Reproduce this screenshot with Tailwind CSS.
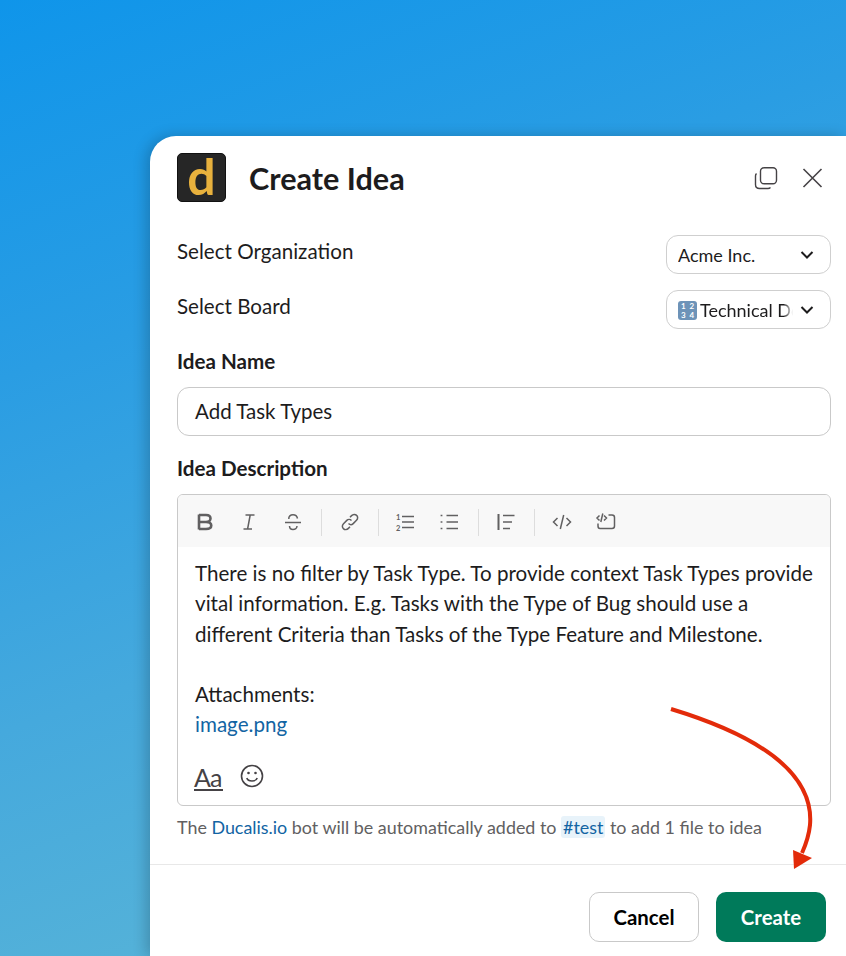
<!DOCTYPE html>
<html lang="en">
<head>
  <meta charset="UTF-8" />
  <meta name="viewport" content="width=device-width, initial-scale=1.0" />
  <title>Create Idea</title>
  <script src="https://cdn.jsdelivr.net/npm/@tailwindcss/browser@4"></script>
</head>
<body class="font-['Lato','Noto_Sans',sans-serif] text-[#1d1c1d]">
  <div class="relative w-[846px] h-[956px] overflow-hidden pt-[136px] pl-[150px] bg-[linear-gradient(160deg,#0f95ea_0%,#2a9de3_30%,#45a9dd_58%,#5cb6d6_92%)]">

    <div class="w-[696px] h-[820px] bg-white rounded-tl-[26px] shadow-[-4px_0_14px_rgba(0,0,0,0.2)]">

      <!-- header -->
      <div class="flex items-center h-[83px] pl-[27px] pr-[22px]">
        <div class="w-[49px] h-[49px] rounded-[5px] bg-[#262626] border border-[#111] flex justify-center">
          <span class="text-[#e8b13d] text-[50px] font-bold leading-[44px]">d</span>
        </div>
        <h1 class="ml-[23px] mt-[3px] text-[30.6px] font-bold leading-none">Create Idea</h1>
        <div class="ml-auto flex items-center gap-[22px] text-[#454245]">
          <svg width="24" height="24" viewBox="0 0 24 24" fill="none" stroke="currentColor" stroke-width="1.4"><rect x="6.5" y="1.7" width="16" height="16" rx="3.5"/><path d="M2.5 7.5 C1.8 8.2 1.5 9 1.5 10 V18.5 C1.5 21 3 22.5 5.5 22.5 H14 C15 22.5 15.8 22.2 16.5 21.5"/></svg>
          <svg width="24" height="24" viewBox="0 0 24 24" fill="none" stroke="currentColor" stroke-width="1.6"><path d="M3.5 3 L21.5 21 M21.5 3 L3.5 21"/></svg>
        </div>
      </div>

      <div class="pl-[27px] pr-[15px]">
        <!-- selects -->
        <div class="flex justify-between h-[55px] pt-[16px]">
          <label class="text-[20.6px] leading-[30px] mt-[1px]">Select Organization</label>
          <div class="w-[165px] h-[39px] border border-[#cfcfcf] rounded-[12px] flex items-center pl-[11px] pr-[16px] pt-[1px] text-[18px]">
            <span class="flex-1 truncate">Acme Inc.</span>
            <svg width="14" height="10" viewBox="0 0 14 10" fill="none" stroke="#1d1c1d" stroke-width="2"><path d="M1.5 2 L7 7.5 L12.5 2"/></svg>
          </div>
        </div>
        <div class="flex justify-between h-[55px] pt-[16px]">
          <label class="text-[20.6px] leading-[30px] mt-[1px]">Select Board</label>
          <div class="w-[165px] h-[39px] border border-[#cfcfcf] rounded-[12px] flex items-center pl-[11px] pr-[16px] pt-[1px] text-[18px] gap-[3px]">
            <span class="w-[19px] h-[19px] rounded-[3px] bg-[#6d93b8] text-white text-[8px] font-bold leading-[9px] grid grid-cols-2 text-center shrink-0 p-[1px]"><span>1</span><span>2</span><span>3</span><span>4</span></span>
            <span class="w-[93px] overflow-hidden whitespace-nowrap [mask-image:linear-gradient(to_right,black_90%,transparent)]">Technical Debt</span>
            <svg class="ml-auto shrink-0" width="14" height="10" viewBox="0 0 14 10" fill="none" stroke="#1d1c1d" stroke-width="2"><path d="M1.5 2 L7 7.5 L12.5 2"/></svg>
          </div>
        </div>

        <!-- idea name -->
        <label class="block text-[20.6px] font-bold leading-[30px] mt-[17px]">Idea Name</label>
        <div class="mt-[11px] h-[49px] border border-[#c9c9c9] rounded-[12px] flex items-center px-[17px] text-[20.5px]">Add Task Types</div>

        <!-- description -->
        <label class="block text-[20.6px] font-bold leading-[30px] mt-[17px]">Idea Description</label>
        <div class="mt-[11px] h-[312px] border border-[#c9c9c9] rounded-[6px] overflow-hidden flex flex-col">
          <div class="h-[52px] bg-[#f8f8f8] flex items-center pl-[16px] pt-[2px] text-[#616061] shrink-0">
            <svg class="w-[22px] h-[22px] mr-[22px]" viewBox="0 0 22 22" fill="none" stroke="currentColor" stroke-width="2.6"><path d="M5 3.5 V18.5 M5 4 H12 C18 4 18 11 12 11 H5 M12 11 C19 11 19 18 12 18 H5"/></svg>
            <svg class="w-[22px] h-[22px] mr-[22px]" viewBox="0 0 22 22" fill="none" stroke="currentColor" stroke-width="1.5"><path d="M7.5 4 H16.5 M5.5 18 H14 M12.2 4 L9.6 18"/></svg>
            <svg class="w-[22px] h-[22px] mr-[17px]" viewBox="0 0 22 22" fill="none" stroke="currentColor" stroke-width="1.5"><path d="M3 11.5 H19 M15.5 7.5 C15 5 13 3.8 11 3.8 C8.5 3.8 6.5 5.2 6.8 8 M7.5 15 C7.5 17.5 9 18.5 11 18.5 C13 18.5 15 17.2 15 15"/></svg>
            <span class="w-px h-[27px] bg-[#dddddd] mr-[17px]"></span>
            <svg class="w-[22px] h-[22px] mr-[17px]" viewBox="0 0 22 22" fill="none" stroke="currentColor" stroke-width="1.5"><path d="M9.5 12.5 C11 14 13 13.8 14.2 12.6 L17.5 9.3 C19 7.8 19 5.6 17.6 4.4 C16.2 3 14 3.2 12.6 4.6 L11 6.2 M12.5 9.5 C11 8 9 8.2 7.8 9.4 L4.5 12.7 C3 14.2 3 16.4 4.4 17.6 C5.8 19 8 18.8 9.4 17.4 L11 15.8"/></svg>
            <span class="w-px h-[27px] bg-[#dddddd] mr-[15px]"></span>
            <svg class="w-[22px] h-[22px] mr-[23px]" viewBox="0 0 22 22" fill="none" stroke="currentColor" stroke-width="1.5"><path d="M8 5.5 H20 M8 11 H20 M8 16.5 H20"/><text x="2" y="8.5" font-size="7.5" font-weight="700" fill="currentColor" stroke="none">1</text><text x="2" y="19.5" font-size="7.5" font-weight="700" fill="currentColor" stroke="none">2</text></svg>
            <svg class="w-[22px] h-[22px] mr-[17px]" viewBox="0 0 22 22" fill="none" stroke="currentColor" stroke-width="1.5"><path d="M7.5 4.5 H19 M7.5 11 H19 M7.5 17.5 H19"/><path d="M2.5 3.7 V5.3 M2.5 10.2 V11.8 M2.5 16.7 V18.3" stroke-width="1.8"/></svg>
            <span class="w-px h-[27px] bg-[#dddddd] mr-[16px]"></span>
            <svg class="w-[22px] h-[22px] mr-[17px]" viewBox="0 0 22 22" fill="none" stroke="currentColor" stroke-width="1.5"><path d="M3.5 3 V19" stroke-width="2"/><path d="M8 4.5 H19.5 M8 11 H17 M8 17.5 H15"/></svg>
            <span class="w-px h-[27px] bg-[#dddddd] mr-[16px]"></span>
            <svg class="w-[22px] h-[22px] mr-[22px]" viewBox="0 0 22 22" fill="none" stroke="currentColor" stroke-width="1.5"><path d="M6.5 7 L2.5 11 L6.5 15 M15.5 7 L19.5 11 L15.5 15 M12.7 4 L9.3 18"/></svg>
            <svg class="w-[22px] h-[22px]" viewBox="0 0 22 22" fill="none" stroke="currentColor" stroke-width="1.5"><path d="M4.5 4.5 L2 7 L4.5 9.5 M9 4.5 L11.5 7 L9 9.5 M7.8 2.5 L5.8 11 M13.5 4 H17 C18.5 4 19.5 5 19.5 6.5 V15 C19.5 16.5 18.5 17.5 17 17.5 H5 C4 17.5 3 16.5 3 15 V12.5"/></svg>
          </div>
          <div class="flex-1 bg-white px-[17px] pt-[11px] text-[20.6px] leading-[30.3px] whitespace-nowrap">
            <p>There is no filter by Task Type. To provide context Task Types provide</p>
            <p>vital information. E.g. Tasks with the Type of Bug should use a</p>
            <p>different Criteria than Tasks of the Type Feature and Milestone.</p>
            <p class="h-[30.3px]"></p>
            <p>Attachments:</p>
            <p class="text-[#1264a3]">image.png</p>
          </div>
          <div class="h-[58px] flex items-start pl-[16px] pt-[16px] shrink-0 text-[#454245]">
            <span class="text-[25px] leading-[29px] border-b-2 border-[#454245] h-[28px] w-[29px] tracking-[-1px]">Aa</span>
            <svg class="ml-[17px] mt-[1px]" width="24" height="24" viewBox="0 0 24 24" fill="none" stroke="currentColor" stroke-width="1.6"><circle cx="12" cy="12" r="10.5"/><path d="M6.8 14 C8 18 16 18 17.2 14"/><circle cx="8.5" cy="9" r="1.3" fill="currentColor" stroke="none"/><circle cx="15.5" cy="9" r="1.3" fill="currentColor" stroke="none"/></svg>
          </div>
        </div>

        <p class="mt-[9px] text-[17.9px] leading-[24px] text-[#616061] whitespace-nowrap">The <span class="text-[#1264a3]">Ducalis.io</span> bot will be automatically added to <span class="text-[#1264a3] bg-[#e8f3fa] rounded-[3px] px-[2px]">#test</span> to add 1 file to idea</p>
      </div>

      <!-- footer -->
      <div class="mt-[25px] border-t border-[#e8e8e8] flex justify-end gap-[17px] pt-[27px] pr-[20px]">
        <button class="w-[110px] h-[50px] border border-[#c9c9c9] rounded-[10px] bg-white text-[20.4px] font-bold text-black">Cancel</button>
        <button class="w-[110px] h-[50px] rounded-[10px] bg-[#007a5a] text-[20.4px] font-bold text-white">Create</button>
      </div>
    </div>

    <!-- annotation arrow -->
    <svg class="absolute left-0 top-0 pointer-events-none" width="846" height="956" viewBox="0 0 846 956" fill="none">
      <path d="M671 709 C740 730 815 765 810 825 C809 835 806 844 802 853" stroke="#e32b0a" stroke-width="4"/>
      <path d="M794 869 L793 850 L812 858 Z" fill="#e32b0a"/>
    </svg>
  </div>
</body>
</html>
